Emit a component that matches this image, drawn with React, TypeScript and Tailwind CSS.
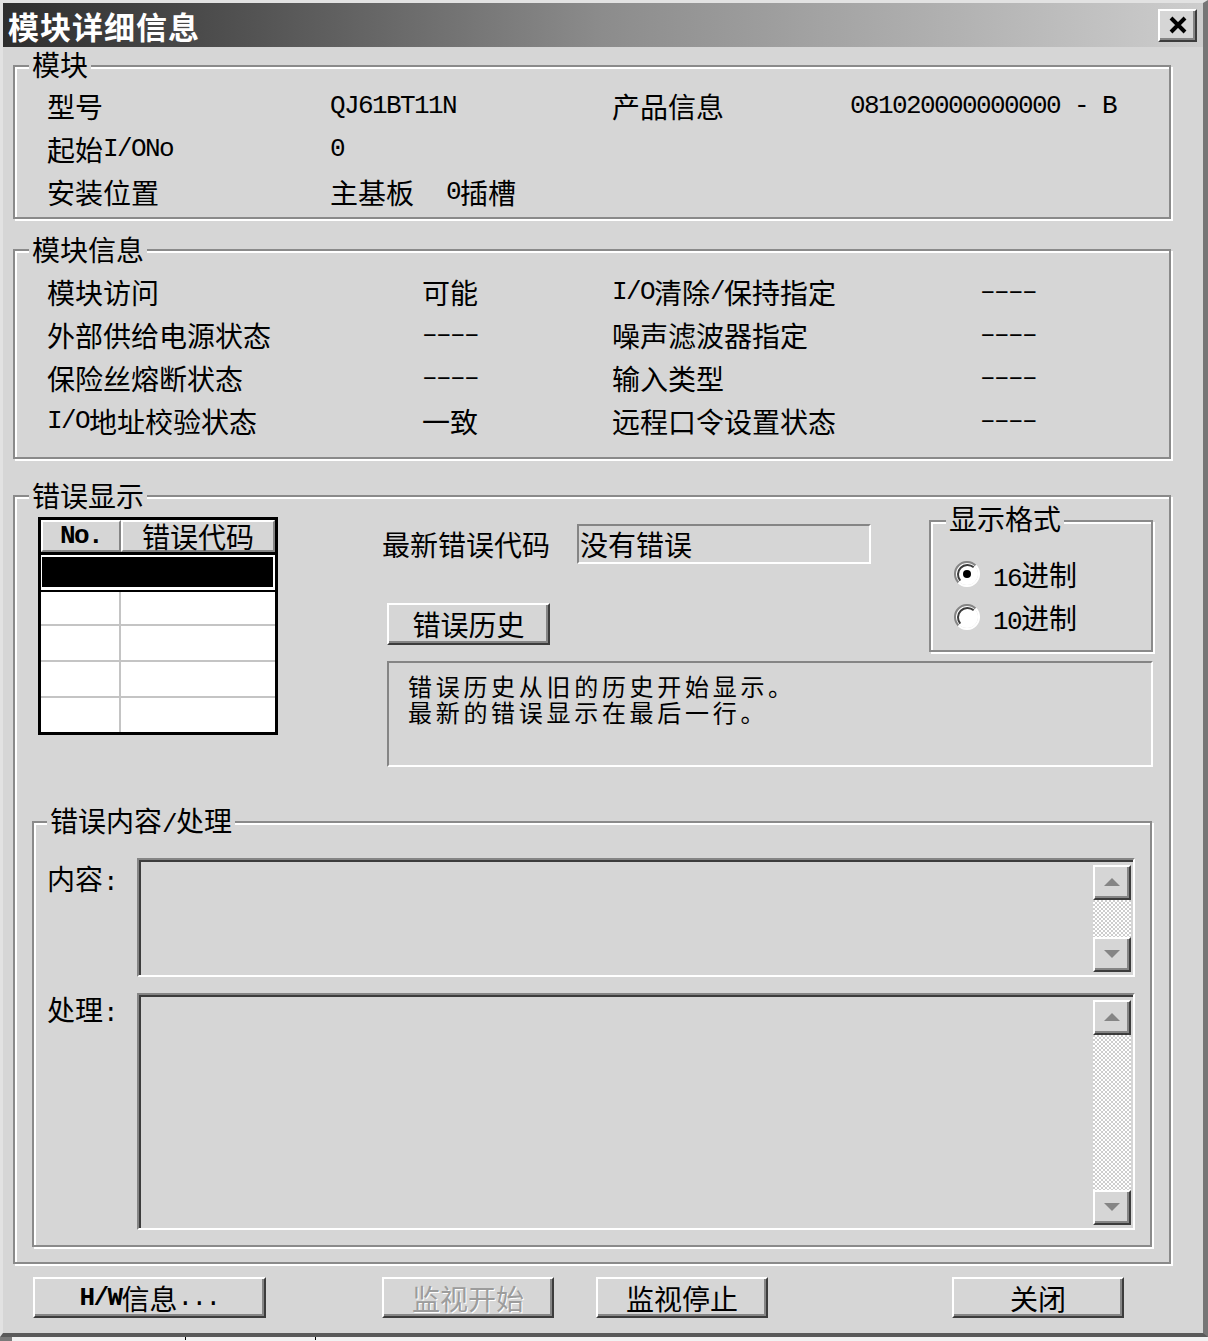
import React from "react";

function M({ children, className = "" }: { children: React.ReactNode; className?: string }) {
  return (
    <span className={"font-['Liberation_Mono',monospace] text-[26px] tracking-[-1.6px] leading-[20px] " + className}>
      {children}
    </span>
  );
}

function Btn({ children, className = "", disabled = false }: { children: React.ReactNode; className?: string; disabled?: boolean }) {
  return (
    <div
      className={
        "h-[41px] shrink-0 bg-[#d6d6d6] border-2 border-t-white border-l-white border-r-[#3c3c3c] border-b-[#3c3c3c] shadow-[inset_-2px_-2px_0_#858585] flex items-center justify-center whitespace-nowrap " +
        (disabled ? "text-[#9c9c9c] [text-shadow:1px_1px_0_#ffffff] " : "") +
        className
      }
    >
      {children}
    </div>
  );
}

function Radio({ checked }: { checked?: boolean }) {
  return (
    <svg width="26" height="26" viewBox="0 0 26 26">
      <circle cx="13" cy="13" r="11" fill="#ffffff" />
      <path d="M4.5 21.5 A12 12 0 0 1 21.5 4.5" stroke="#858585" strokeWidth="2" fill="none" />
      <path d="M6.3 19.7 A9.5 9.5 0 0 1 19.7 6.3" stroke="#3c3c3c" strokeWidth="2" fill="none" />
      <path d="M21.5 4.5 A12 12 0 0 1 4.5 21.5" stroke="#ffffff" strokeWidth="2" fill="none" />
      {checked && <circle cx="13" cy="13" r="4" fill="#000000" />}
    </svg>
  );
}

function ScrollBtn({ up }: { up?: boolean }) {
  return (
    <div className="h-[35px] shrink-0 bg-[#d6d6d6] border-2 border-t-white border-l-white border-r-[#3c3c3c] border-b-[#3c3c3c] shadow-[inset_-2px_-2px_0_#858585] flex items-center justify-center">
      <svg width="16" height="9" viewBox="0 0 16 9">
        {up ? <polygon points="8,0 16,8 0,8" fill="#858585" /> : <polygon points="0,0 16,0 8,8" fill="#858585" />}
      </svg>
    </div>
  );
}

function TextArea({ h }: { h: string }) {
  return (
    <div
      className={
        "w-[998px] flex border-2 border-t-[#858585] border-l-[#858585] border-b-white border-r-white shadow-[inset_2px_2px_0_#3c3c3c] pt-[5px] pr-[2px] pb-[3px] " +
        h
      }
    >
      <div className="flex-1" />
      <div className="w-[38px] flex flex-col">
        <ScrollBtn up />
        <div className="flex-1 bg-[repeating-conic-gradient(#ffffff_0%_25%,#cdcdcd_0%_50%)] bg-[length:4px_4px]" />
        <ScrollBtn />
      </div>
    </div>
  );
}

const groupBox = "border-2 border-[#8a8a8a] shadow-[inset_2px_2px_0_#ffffff,2px_2px_0_#ffffff]";
const DASH = "––––";

export default function App() {
  const g1: React.ReactNode[][] = [
    ["型号", <M>QJ61BT11N</M>, "产品信息", <M>081020000000000 - B</M>],
    [<>起始<M>I/ONo</M></>, <M>0</M>, "", ""],
    ["安装位置", <>主基板<M className="ml-[32px]">0</M>插槽</>, "", ""],
  ];
  const g2: React.ReactNode[][] = [
    ["模块访问", "可能", <><M>I/O</M>清除<M>/</M>保持指定</>, <M>{DASH}</M>],
    ["外部供给电源状态", <M>{DASH}</M>, "噪声滤波器指定", <M>{DASH}</M>],
    ["保险丝熔断状态", <M>{DASH}</M>, "输入类型", <M>{DASH}</M>],
    [<><M>I/O</M>地址校验状态</>, "一致", "远程口令设置状态", <M>{DASH}</M>],
  ];

  return (
    <div className="w-[1208px] h-[1341px] bg-[#f2f2f2] overflow-hidden font-['Noto_Sans_CJK_SC',sans-serif] text-[28px] leading-[32px] text-black">
      <div className="h-[1337px] flex flex-col bg-[#d6d6d6] border-t-[3px] border-l-[3px] border-r-[5px] border-b-[4px] border-t-[#e2e2e2] border-l-[#e2e2e2] border-r-[#767676] border-b-[#5a5a5a]">
        {/* Title bar */}
        <div className="h-[44px] shrink-0 flex items-center justify-between pl-[5px] pr-[6px] bg-linear-to-r from-[#2e2e2e] via-[#8c8c8c] to-[#cdcdcd]">
          <span className="text-white font-bold text-[31px] leading-none tracking-[1px]">模块详细信息</span>
          <div className="w-[39px] h-[33px] bg-[#d6d6d6] border-2 border-t-white border-l-white border-r-[#3c3c3c] border-b-[#3c3c3c] shadow-[inset_-2px_-2px_0_#858585] flex items-center justify-center">
            <svg width="18" height="18" viewBox="0 0 18 18">
              <path d="M2 2L16 16M16 2L2 16" stroke="#000" strokeWidth="4" />
            </svg>
          </div>
        </div>

        {/* Body */}
        <div className="flex-1 flex flex-col pl-[10px]">
          {/* 模块 */}
          <div className={"mt-[18px] w-[1158px] " + groupBox}>
            <div className="mt-[-19px] ml-[14px] w-fit px-[3px] bg-[#d6d6d6]">模块</div>
            <div className="grid grid-cols-[283px_282px_238px_1fr] pl-[32px] pt-[4px] pb-[4px]">
              {g1.map((r, ri) =>
                r.map((c, ci) => (
                  <div key={ri + "-" + ci} className="h-[43px] flex items-center whitespace-nowrap">
                    {c}
                  </div>
                ))
              )}
            </div>
          </div>

          {/* 模块信息 */}
          <div className={"mt-[30px] w-[1158px] " + groupBox}>
            <div className="mt-[-18px] ml-[14px] w-fit px-[3px] bg-[#d6d6d6]">模块信息</div>
            <div className="grid grid-cols-[375px_190px_368px_1fr] pl-[32px] pt-[5px] pb-[15px]">
              {g2.map((r, ri) =>
                r.map((c, ci) => (
                  <div key={ri + "-" + ci} className="h-[43px] flex items-center whitespace-nowrap">
                    {c}
                  </div>
                ))
              )}
            </div>
          </div>

          {/* 错误显示 */}
          <div className={"mt-[36px] w-[1158px] pb-[15px] " + groupBox}>
            <div className="mt-[-18px] ml-[14px] w-fit px-[3px] bg-[#d6d6d6]">错误显示</div>
            <div className="flex">
              {/* table */}
              <div className="mt-[6px] ml-[23px] w-[240px] h-[218px] border-[3px] border-black bg-white flex flex-col">
                <div className="h-[35px] shrink-0 flex bg-[#d6d6d6] border-b-[3px] border-black">
                  <div className="w-[80px] border-2 border-t-white border-l-white border-r-[#858585] border-b-[#858585] flex items-center justify-center">
                    <M className="font-bold">No.</M>
                  </div>
                  <div className="flex-1 border-2 border-t-white border-l-white border-r-[#858585] border-b-[#858585] flex items-center justify-center">
                    错误代码
                  </div>
                </div>
                <div className="h-[37px] shrink-0 flex flex-col">
                  <div className="mt-[2px] ml-[1px] mr-[2px] h-[30px] bg-black" />
                  <div className="mt-[3px] h-[2px] bg-black" />
                </div>
                {[0, 1, 2, 3].map((i) => (
                  <div
                    key={i}
                    className={
                      "flex " +
                      (i === 0 ? "h-[34px] border-b-2 border-[#c4c4c4]" : i === 3 ? "flex-1" : "h-[36px] border-b-2 border-[#c4c4c4]")
                    }
                  >
                    <div className="w-[80px] border-r-2 border-[#c4c4c4]" />
                    <div className="flex-1" />
                  </div>
                ))}
              </div>

              {/* right part */}
              <div className="ml-[104px] w-[771px] flex flex-col">
                <div className="flex justify-between">
                  <div className="flex flex-col">
                    <div className="mt-[13px] h-[40px] flex items-center">
                      <span className="whitespace-nowrap">最新错误代码</span>
                      <div className="ml-[27px] w-[294px] h-[40px] border-2 border-t-[#858585] border-l-[#858585] border-b-white border-r-white flex items-center pl-[1px]">
                        没有错误
                      </div>
                    </div>
                    <Btn className="mt-[39px] ml-[5px] w-[163px] h-[42px]">错误历史</Btn>
                  </div>
                  <div className={"mt-[9px] w-[224px] h-[132px] flex flex-col " + groupBox}>
                    <div className="mt-[-20px] ml-[15px] w-fit px-[3px] bg-[#d6d6d6]">显示格式</div>
                    <div className="pt-[18px] pl-[23px]">
                      <div className="h-[43px] flex items-center">
                        <Radio checked />
                        <span className="ml-[13px] whitespace-nowrap">
                          <M>16</M>进制
                        </span>
                      </div>
                      <div className="h-[43px] flex items-center">
                        <Radio />
                        <span className="ml-[13px] whitespace-nowrap">
                          <M>10</M>进制
                        </span>
                      </div>
                    </div>
                  </div>
                </div>
                <div className="mt-[9px] ml-[5px] w-[766px] h-[106px] border-2 border-t-[#858585] border-l-[#858585] border-b-white border-r-white pt-[10px] pl-[19px] text-[24px] tracking-[3.7px] leading-[26px]">
                  <div>错误历史从旧的历史开始显示。</div>
                  <div>最新的错误显示在最后一行。</div>
                </div>
              </div>
            </div>

            {/* 错误内容/处理 */}
            <div className={"mt-[54px] ml-[17px] w-[1120px] pb-[15px] " + groupBox}>
              <div className="mt-[-19px] ml-[13px] w-fit px-[3px] bg-[#d6d6d6]">
                错误内容<M>/</M>处理
              </div>
              <div className="mt-[22px] flex">
                <div className="w-[103px] pl-[13px] pt-[4px] whitespace-nowrap">
                  内容<M>:</M>
                </div>
                <TextArea h="h-[119px]" />
              </div>
              <div className="mt-[16px] flex">
                <div className="w-[103px] pl-[13px] pt-[0px] whitespace-nowrap">
                  处理<M>:</M>
                </div>
                <TextArea h="h-[237px]" />
              </div>
            </div>
          </div>

          {/* Bottom buttons */}
          <div className="mt-[13px] flex">
            <Btn className="ml-[20px] w-[233px]">
              <M className="font-bold">H/W</M>信息<M>...</M>
            </Btn>
            <Btn className="ml-[116px] w-[172px]" disabled>
              监视开始
            </Btn>
            <Btn className="ml-[42px] w-[172px]">监视停止</Btn>
            <Btn className="ml-[184px] w-[172px]">关闭</Btn>
          </div>
        </div>
      </div>
      {/* bottom strip */}
      <div className="h-[4px] flex items-start">
        <div className="w-[12px] h-[4px] bg-[#7a7a7a]" />
        <div className="ml-[173px] w-[1px] h-[3px] bg-black" />
        <div className="ml-[129px] w-[1px] h-[3px] bg-black" />
      </div>
    </div>
  );
}
